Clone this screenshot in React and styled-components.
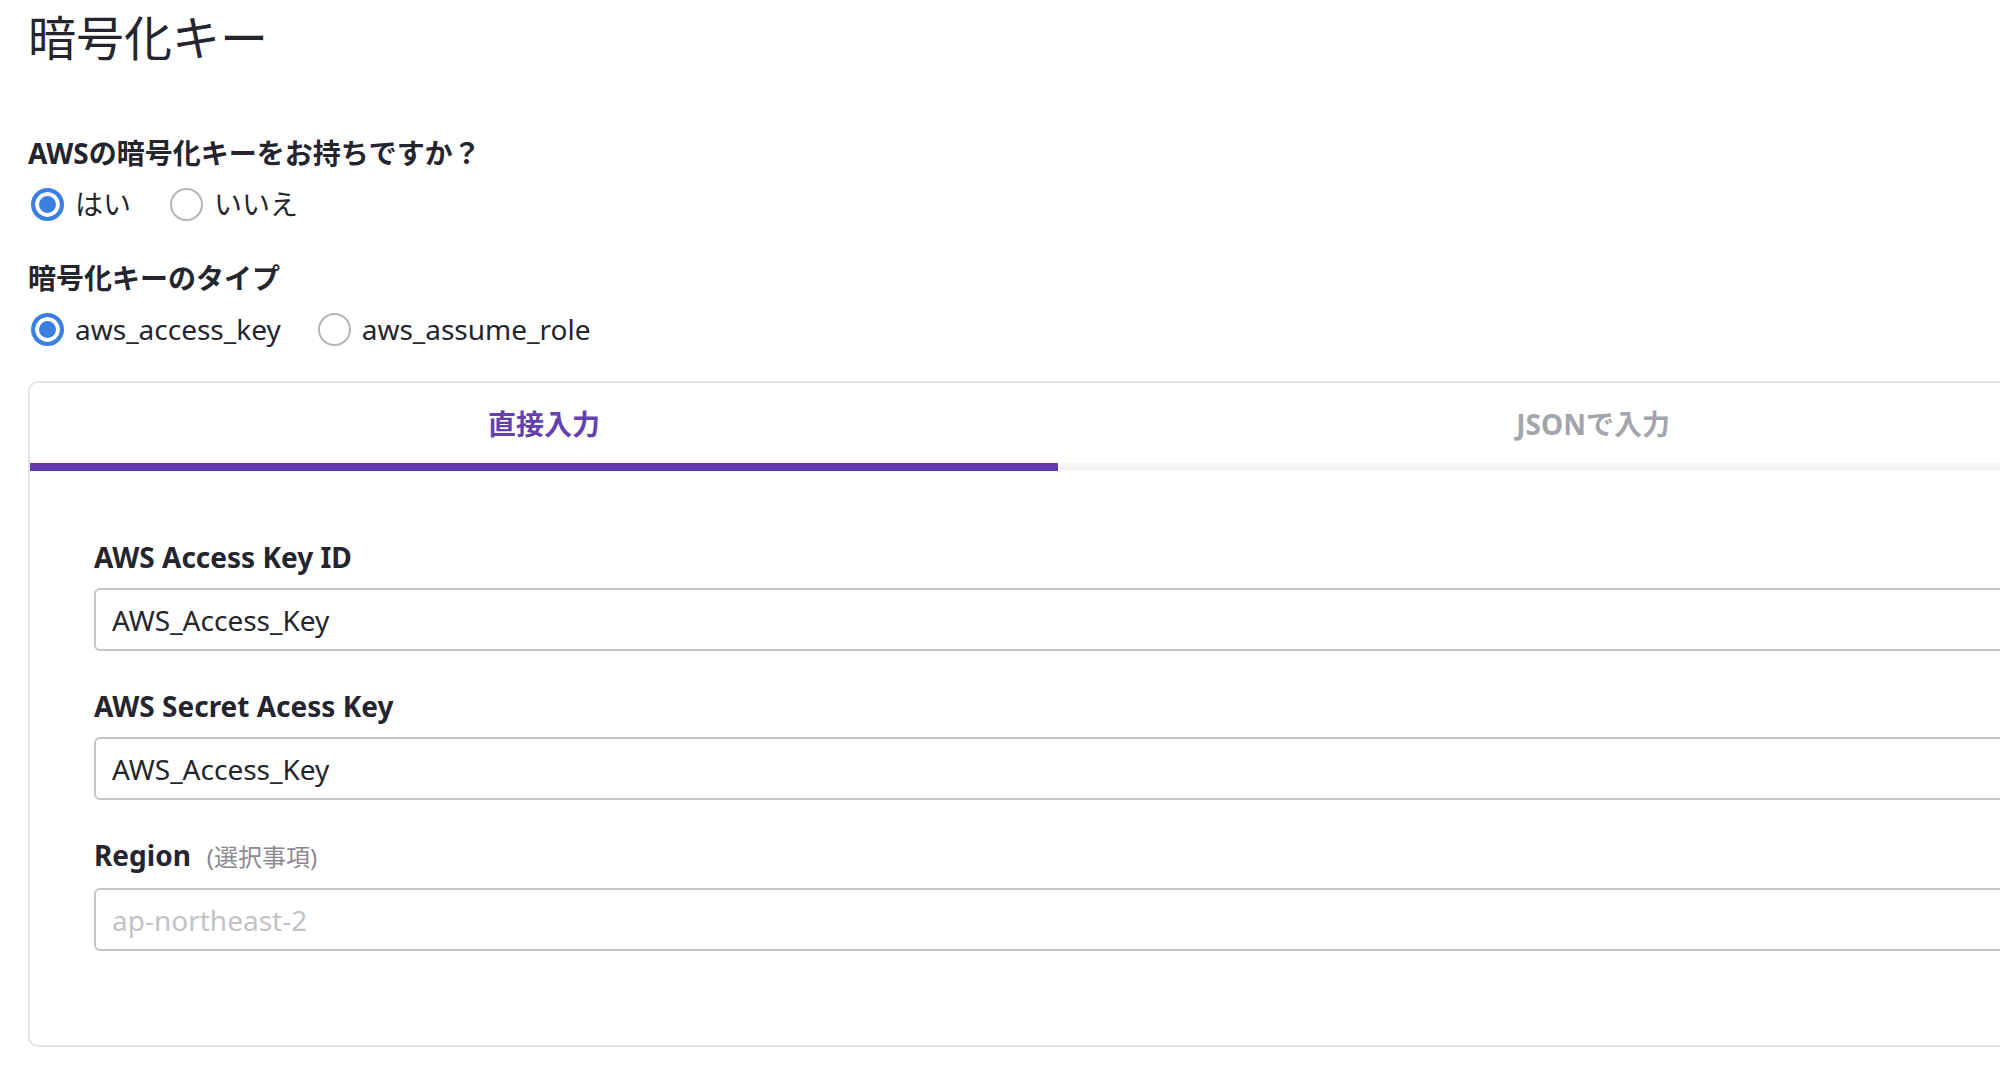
import React, { useState } from 'react';
import styled, { createGlobalStyle } from 'styled-components';

const GlobalStyle = createGlobalStyle`
  html, body {
    margin: 0;
    padding: 0;
    background: #ffffff;
    overflow: hidden;
  }
  body {
    font-family: "Noto Sans", "Noto Sans CJK JP", sans-serif;
    color: #24252f;
  }
  * {
    box-sizing: border-box;
  }
`;

const Page = styled.div`
  padding: 9px 0 0 28px;
  width: 2140px;
`;

const Title = styled.h1`
  margin: 0;
  font-size: 48px;
  font-weight: 400;
  line-height: 58px;
  color: #24252f;
`;

const Group = styled.div`
  margin-top: ${props => props.gap || 38}px;
`;

const GroupLabel = styled.div`
  font-size: 28px;
  font-weight: 700;
  line-height: 36px;
`;

const RadioRow = styled.div`
  display: flex;
  align-items: center;
  gap: ${props => props.gap || 36}px;
  margin-top: 15px;
  height: 36px;
  padding-left: 3px;
`;

const RadioOption = styled.label`
  display: flex;
  align-items: center;
  gap: 11px;
  font-size: 28px;
  line-height: 36px;
  cursor: pointer;
`;

const RadioCircle = styled.span`
  width: 33px;
  height: 33px;
  border-radius: 50%;
  flex-shrink: 0;
  border: ${props => (props.checked ? '4px solid #3b7fe0' : '2px solid #b4b4b9')};
  background: ${props => (props.checked ? '#3b7fe0' : '#ffffff')};
  box-shadow: ${props => (props.checked ? 'inset 0 0 0 4px #ffffff' : 'none')};
`;

const Card = styled.div`
  margin-top: 34px;
  width: 2102px;
  border: 2px solid #e2e2e4;
  border-radius: 10px;
  padding-bottom: 94px;
`;

const TabBar = styled.div`
  display: flex;
  background: #ffffff;
  border-radius: 10px 10px 0 0;
`;

const Tab = styled.div`
  flex: 1 1 auto;
  height: 88px;
  display: flex;
  align-items: center;
  justify-content: center;
  font-size: 28px;
  font-weight: 700;
  color: ${props => (props.active ? '#6440b0' : '#a4a4ab')};
  border-bottom: 8px solid ${props => (props.active ? '#633bae' : '#f5f5f5')};
  cursor: pointer;
`;

const Form = styled.div`
  padding: 68px 64px 0 64px;
`;

const Field = styled.div`
  & + & {
    margin-top: 37px;
  }
`;

const FieldLabel = styled.div`
  display: flex;
  align-items: baseline;
  gap: 16px;
  font-size: 28px;
  font-weight: 700;
  line-height: 36px;
  margin-bottom: 13px;
`;

const Optional = styled.span`
  font-size: 24px;
  font-weight: 400;
  color: #8a8a93;
`;

const Input = styled.input`
  display: block;
  width: 100%;
  height: 63px;
  border: 2px solid #c4c4c9;
  border-radius: 6px;
  padding: 0 16px;
  font-family: "Noto Sans", "Noto Sans CJK JP", sans-serif;
  font-size: 28px;
  color: #24252f;
  outline: none;
  &::placeholder {
    color: #c2c2c7;
  }
`;

const Radio = ({ checked, label, onClick }) => (
  <RadioOption onClick={onClick}>
    <RadioCircle checked={checked} />
    {label}
  </RadioOption>
);

const App = () => {
  const [hasKey, setHasKey] = useState('yes');
  const [keyType, setKeyType] = useState('aws_access_key');
  const [tab, setTab] = useState('direct');

  return (
    <>
      <GlobalStyle />
      <Page>
        <Title>暗号化キー</Title>

        <Group gap={68}>
          <GroupLabel>AWSの暗号化キーをお持ちですか？</GroupLabel>
          <RadioRow gap={39}>
            <Radio checked={hasKey === 'yes'} label="はい" onClick={() => setHasKey('yes')} />
            <Radio checked={hasKey === 'no'} label="いいえ" onClick={() => setHasKey('no')} />
          </RadioRow>
        </Group>

        <Group gap={38}>
          <GroupLabel>暗号化キーのタイプ</GroupLabel>
          <RadioRow gap={37}>
            <Radio
              checked={keyType === 'aws_access_key'}
              label="aws_access_key"
              onClick={() => setKeyType('aws_access_key')}
            />
            <Radio
              checked={keyType === 'aws_assume_role'}
              label="aws_assume_role"
              onClick={() => setKeyType('aws_assume_role')}
            />
          </RadioRow>
        </Group>

        <Card>
          <TabBar>
            <Tab active={tab === 'direct'} onClick={() => setTab('direct')}>直接入力</Tab>
            <Tab active={tab === 'json'} onClick={() => setTab('json')}>JSONで入力</Tab>
          </TabBar>
          <Form>
            <Field>
              <FieldLabel>AWS Access Key ID</FieldLabel>
              <Input defaultValue="AWS_Access_Key" />
            </Field>
            <Field>
              <FieldLabel>AWS Secret Acess Key</FieldLabel>
              <Input defaultValue="AWS_Access_Key" />
            </Field>
            <Field>
              <FieldLabel>
                Region
                <Optional>(選択事項)</Optional>
              </FieldLabel>
              <Input placeholder="ap-northeast-2" />
            </Field>
          </Form>
        </Card>
      </Page>
    </>
  );
};

export default App;
